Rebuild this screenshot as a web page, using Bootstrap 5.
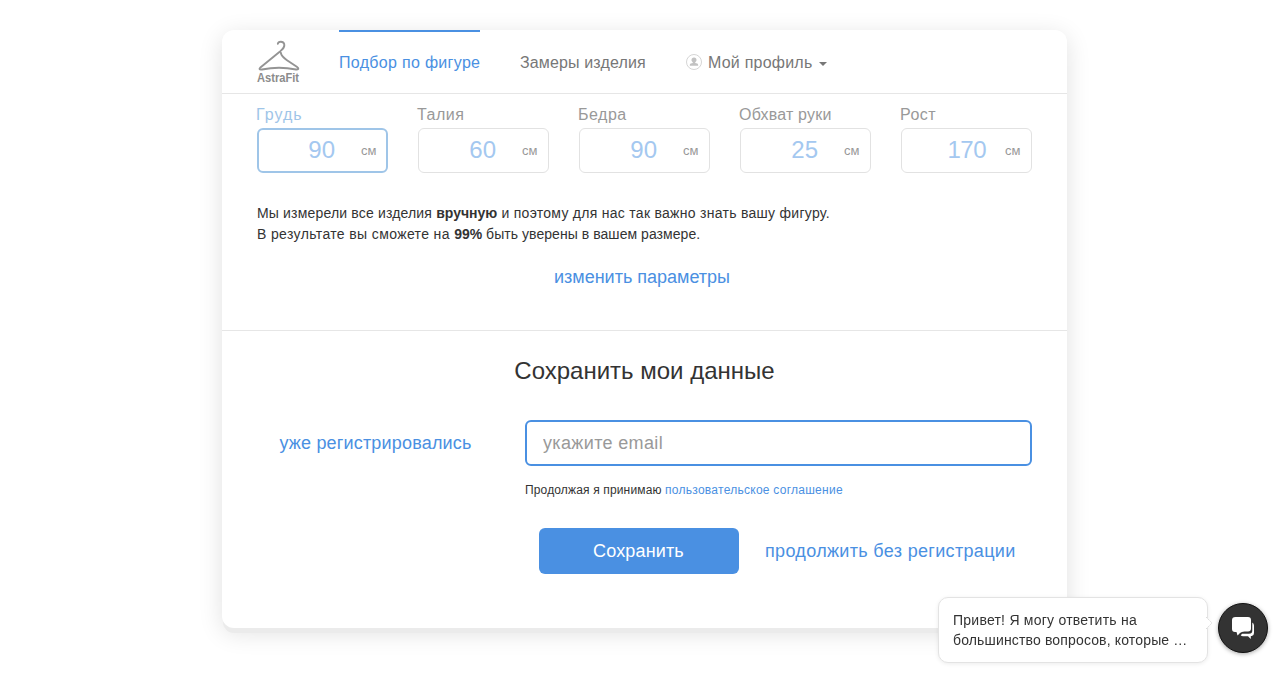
<!DOCTYPE html>
<html lang="ru">
<head>
<meta charset="utf-8">
<meta name="viewport" content="width=device-width, initial-scale=1">
<title>AstraFit</title>
<link href="https://cdn.jsdelivr.net/npm/bootstrap@5.3.0/dist/css/bootstrap.min.css" rel="stylesheet">
<script src="https://cdn.jsdelivr.net/npm/bootstrap@5.3.0/dist/js/bootstrap.bundle.min.js" defer></script>
<style>
  body { font-family: "Liberation Sans", Arial, sans-serif; font-size: 14px; line-height: 21px; color: #333; height: 674px; overflow: hidden; }
  a { color: #4a90e2; text-decoration: none; }
  .panel { width: 845px; height: 598px; margin: 30px 0 0 222px; border-radius: 12px; box-shadow: 0 6px 0 -1px #ebebeb, 0 5px 25px rgba(0,0,0,.12); }
  .panel-head { height: 64px; padding-left: 35px; border-bottom: 1px solid #e6e6e6; }
  .logo { width: 44px; height: 46px; margin: 9px 38px 0 0; overflow: visible; }
  .tab { height: 63px; padding-top: 2px; margin-right: 40px; font-size: 16px; color: #777; white-space: nowrap; }
  .tab.active { width: 141px; color: #4a90e2; border-top: 2px solid #4a90e2; padding-top: 0; letter-spacing: .31px; }
  .tab.garment { width: 126px; letter-spacing: .14px; }
  .tab.profile { letter-spacing: .22px; }
  .tab .person { margin-right: 6px; margin-top: -2px; }
  .tab .caret { border: 4px solid transparent; border-top-color: #777; border-bottom: 0; margin: 2px 0 0 7px; }
  .sizes { gap: 30px; padding: 11px 35px 0; }
  .size { flex: 1 1 0; color: #999; }
  .size label { display: block; font-size: 16px; line-height: 20px; margin-bottom: 3px; letter-spacing: .5px; margin-left: -1px; white-space: nowrap; }
  .size.wide-label label { letter-spacing: .2px; }
  .size.current label { color: #9fc5e8; letter-spacing: 1px; }
  .size-box { height: 45px; border: 1px solid #e2e2e2; border-radius: 6px; padding: 0 10px 2px 0; }
  .size-box b { font-weight: 400; font-size: 24px; color: #a4c8f0; margin-right: 26px; }
  .size-box.three b { margin-right: 19px; letter-spacing: -.5px; }
  .size-box span { font-size: 13px; width: 16px; padding-top: 1px; }
  .size.current .size-box { border: 2px solid #9fc5e8; padding-right: 9px; }
  .note { padding: 30px 35px 0; }
  .s1 { letter-spacing: .17px; } .s2 { letter-spacing: .28px; } .s3 { letter-spacing: .37px; } .s4 { letter-spacing: .05px; }
  .change { font-size: 18px; margin-top: 22px; padding-right: 5px; }
  .save-block { border-top: 1px solid #e6e6e6; margin-top: 42px; padding: 0 35px; }
  .save-block h2 { font-size: 24px; font-weight: 400; line-height: 30px; margin: 25px 0 34px; }
  .known { width: 237px; height: 46px; margin-right: 31px; font-size: 18px; letter-spacing: .18px; }
  .email.form-control { height: 46px; border: 2px solid #4a90e2; border-radius: 6px; font-size: 18px; padding: 0 16px; letter-spacing: .35px; }
  .email::placeholder { color: #999; opacity: 1; }
  .terms { font-size: 12px; line-height: 18px; margin-top: 15px; letter-spacing: .15px; }
  .terms a { letter-spacing: .26px; }
  .actions { margin: 29px 0 0 14px; font-size: 18px; letter-spacing: .33px; }
  .actions .btn { width: 200px; height: 46px; background: #4a90e2; border: 0; border-radius: 6px; font-size: 18px; color: #fff; margin-right: 26px; padding: 0 1px 0 0; letter-spacing: .15px; }
  .bubble { position: fixed; left: 938px; top: 597px; width: 270px; height: 66px; background: #fff; border: 1px solid #e3e3e3; border-radius: 10px; padding: 12px 14px; line-height: 20px; box-shadow: 0 1px 4px rgba(0,0,0,.08); letter-spacing: .24px; }
  .bubble .second { letter-spacing: .15px; }
  .bubble svg { position: absolute; left: 267px; top: 18px; }
  .chat { position: fixed; left: 1218px; top: 603px; width: 50px; height: 50px; border-radius: 50%; background: #333; border: 1px solid #111; box-shadow: 0 1px 4px rgba(0,0,0,.35); }
</style>
</head>
<body class="bg-white">
<main class="panel bg-white">
  <nav class="panel-head d-flex">
    <svg class="logo" viewBox="0 0 44 46" fill="none" stroke="#949494" stroke-width="1.900" stroke-linecap="round" stroke-linejoin="round">
      <path d="M20.800 4.800C21.200 2.200 26.300 1.800 27.200 5C28 8.200 26 9.800 23.300 12.200L3.400 28.400C1.800 30 2.400 31 5 30.500Q22 27 39 30.500C42 30.900 42 29.300 39.800 27.800L30 21.200C26.500 18.800 24.200 17 23.800 13.600"/>
      <text x="0" y="42.500" fill="#8c8c8c" stroke="none" font-size="12.500" font-weight="700" textLength="42" lengthAdjust="spacingAndGlyphs">AstraFit</text>
    </svg>
    <a class="tab active d-flex align-items-center" href="#">Подбор по фигуре</a>
    <a class="tab garment d-flex align-items-center" href="#">Замеры изделия</a>
    <a class="tab profile d-flex align-items-center" href="#">
      <svg class="person" width="16" height="16" viewBox="0 0 16 16"><circle cx="8" cy="8" r="7.500" fill="#fff" stroke="#d5d5d5"/><path d="M5.500 6a2.500 2.500 0 0 1 5 0c0 1-.5 1.800-1.300 2.300v.7l2 .6c.8.3 1 .8 1 2.200H3.800c0-1.400.2-1.900 1-2.200l2-.6v-.7C6 7.800 5.500 7 5.500 6z" fill="#c2c2c2"/></svg>
      <span>Мой профиль</span><i class="caret"></i></a>
  </nav>
  <section class="sizes d-flex">
    <div class="size current"><label>Грудь</label><div class="size-box d-flex align-items-center justify-content-end"><b>90</b><span>см</span></div></div>
    <div class="size"><label>Талия</label><div class="size-box d-flex align-items-center justify-content-end"><b>60</b><span>см</span></div></div>
    <div class="size"><label>Бедра</label><div class="size-box d-flex align-items-center justify-content-end"><b>90</b><span>см</span></div></div>
    <div class="size wide-label"><label>Обхват руки</label><div class="size-box d-flex align-items-center justify-content-end"><b>25</b><span>см</span></div></div>
    <div class="size"><label>Рост</label><div class="size-box three d-flex align-items-center justify-content-end"><b>170</b><span>см</span></div></div>
  </section>
  <section class="note">
    <div class="text-nowrap"><span class="s1">Мы измерели все изделия </span><strong>вручную</strong><span class="s2"> и поэтому для нас так важно знать вашу фигуру.</span></div>
    <div class="text-nowrap"><span class="s3">В результате вы сможете на </span><strong>99%</strong><span class="s4"> быть уверены в вашем размере.</span></div>
    <div class="change text-center"><a href="#">изменить параметры</a></div>
  </section>
  <section class="save-block">
    <h2 class="text-center">Сохранить мои данные</h2>
    <div class="d-flex">
      <div class="known d-flex align-items-center justify-content-center"><a href="#">уже регистрировались</a></div>
      <div class="flex-grow-1">
        <input class="email form-control shadow-none" type="email" placeholder="укажите email">
        <div class="terms text-nowrap">Продолжая я принимаю <a href="#">пользовательское соглашение</a></div>
        <div class="actions d-flex align-items-center text-nowrap"><button class="btn" type="button">Сохранить</button><a href="#">продолжить без регистрации</a></div>
      </div>
    </div>
  </section>
</main>
<aside class="bubble text-nowrap"><div>Привет! Я могу ответить на</div><div class="second">большинство вопросов, которые …</div>
  <svg width="8" height="14" viewBox="0 0 8 14"><path d="M0 1L6 7L0 13" fill="#fff" stroke="#ddd" stroke-dasharray="2 1"/></svg>
</aside>
<button class="chat d-flex align-items-center justify-content-center p-0" type="button" aria-label="Чат">
  <svg width="24" height="24" viewBox="0 0 24 24" fill="#fff"><path d="M4.500 1h12.500q3 0 3 3v8.500q0 3-3 3H13.500q-3 0-4.500 1.500L6.500 19.500 5.500 16H4q-3 0-3-3V4q0-3 3.500-3z"/><path d="M21.300 6.500q1.700.8 1.700 3v7.500q0 2.600-2.200 3h-1v3L17 20.200H12q-1.500 0-2.300-1l1.500-1.400H18q3.300 0 3.300-3.300z"/></svg>
</button>
</body>
</html>
